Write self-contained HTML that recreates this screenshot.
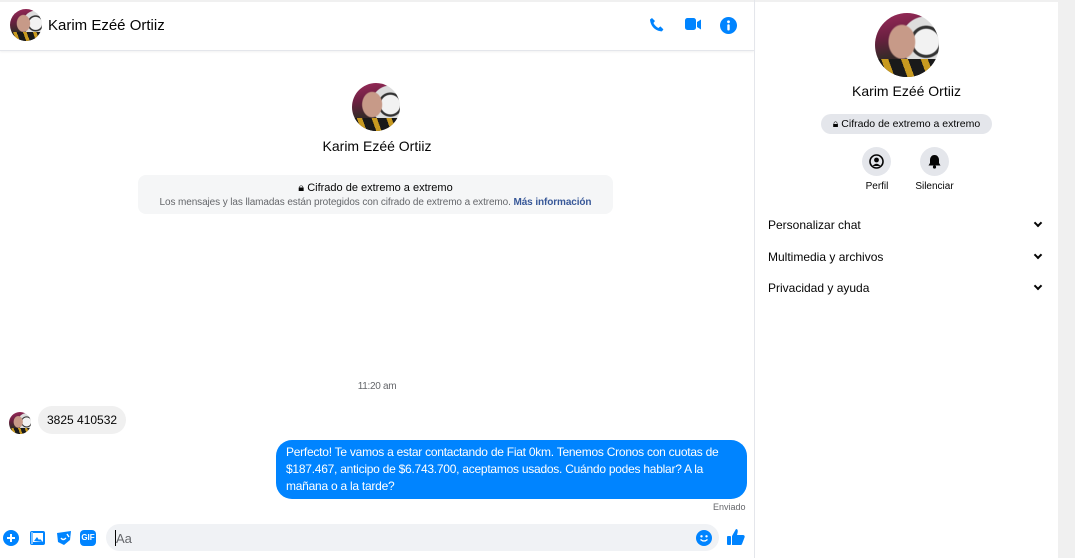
<!DOCTYPE html>
<html><head><meta charset="utf-8"><style>
*{margin:0;padding:0;box-sizing:border-box}
body{width:1075px;height:558px;overflow:hidden;background:#fff;font-family:"Liberation Sans",sans-serif;color:#050505;position:relative}
.abs{position:absolute}
.av{border-radius:50%;overflow:hidden;background:
radial-gradient(ellipse 22% 28% at 42% 45%,#c79a88 0 90%,transparent 100%),
radial-gradient(circle at 80% 45%,#f2f2f2 0 20%,#333 22% 25%,#ddd 27% 40%,transparent 42%),
linear-gradient(170deg,#9a2a5a 0%,#6a2040 35%,#3a2a2a 60%,#1a1414 100%);}
.av::after{content:"";position:absolute;left:0;right:0;bottom:0;height:28%;background:repeating-linear-gradient(70deg,#1a1a1a 0 18%,#c89a20 18% 28%)}
.chev{position:absolute;width:6px;height:6px;border-right:2px solid #050505;border-bottom:2px solid #050505;transform:rotate(45deg)}
</style></head><body>
<div class="abs" style="left:0;top:0;width:754px;height:51px;border-bottom:1px solid #e4e6eb;box-shadow:0 1px 2px rgba(0,0,0,.06)"></div>
<div class="abs" style="left:0;top:0;width:1058px;height:2px;background:#f0f0f0"></div>
<div class="abs av" style="left:10px;top:9px;width:32px;height:32px"></div>
<div class="abs" style="left:48px;top:17px;font-size:15px">Karim Ezéé Ortiiz</div>
<svg class="abs" style="left:649px;top:17px" width="16" height="16" viewBox="0 0 16 16"><path d="M3 1l3 3-1.6 2c1 2 3 4 5 5l2-1.6 3 3-1.5 2C6 14 1.5 9 1 2.5z" fill="#0084ff"/></svg>
<svg class="abs" style="left:685px;top:17px" width="17" height="15" viewBox="0 0 17 15"><rect x="0" y="1" width="11" height="12" rx="2.5" fill="#0084ff"/><path d="M12 5l4-2.5v10L12 10z" fill="#0084ff"/></svg>
<svg class="abs" style="left:720px;top:17px" width="17" height="17" viewBox="0 0 17 17"><circle cx="8.5" cy="8.5" r="8.5" fill="#0084ff"/><circle cx="8.5" cy="4.8" r="1.4" fill="#fff"/><rect x="7.3" y="7.2" width="2.4" height="6.3" rx="1" fill="#fff"/></svg>
<div class="abs" style="left:754px;top:0;width:1px;height:558px;background:#e4e6eb"></div>
<div class="abs" style="left:1058px;top:0;width:17px;height:558px;background:#f0f0f0"></div>
<div class="abs av" style="left:352px;top:83px;width:48px;height:48px"></div>
<div class="abs" style="left:0;width:754px;top:138px;text-align:center;font-size:14px">Karim Ezéé Ortiiz</div>
<div class="abs" style="left:138px;top:175px;width:475px;height:39px;background:#f5f6f7;border-radius:8px;text-align:center">
<div style="font-size:11px;margin-top:7px">&#128274;&#xFE0E; Cifrado de extremo a extremo</div>
<div style="font-size:10px;color:#65676b;margin-top:2px;letter-spacing:-.1px">Los mensajes y las llamadas están protegidos con cifrado de extremo a extremo. <span style="color:#385898;font-weight:bold">Más información</span></div>
</div>
<div class="abs" style="left:0;width:754px;top:381px;text-align:center;font-size:10px;color:#65676b;letter-spacing:-.3px">11:20 am</div>
<div class="abs av" style="left:9px;top:412px;width:22px;height:22px"></div>
<div class="abs" style="left:38px;top:406px;height:28px;padding:0 9px;line-height:28px;background:#f0f0f0;border-radius:14px;font-size:12px">3825 410532</div>
<div class="abs" style="left:276px;top:440px;width:471px;height:59px;background:#0084ff;border-radius:16px;color:#fff;font-size:12px;line-height:17px;padding:4px 8px 4px 10px;letter-spacing:-.25px">Perfecto! Te vamos a estar contactando de Fiat 0km. Tenemos Cronos con cuotas de $187.467, anticipo de $6.743.700, aceptamos usados. Cuándo podes hablar? A la mañana o a la tarde?</div>
<div class="abs" style="left:713px;top:502px;font-size:9px;color:#65676b">Enviado</div>
<svg class="abs" style="left:3px;top:530px" width="16" height="16" viewBox="0 0 16 16"><circle cx="8" cy="8" r="8" fill="#0084ff"/><path d="M8 4v8M4 8h8" stroke="#fff" stroke-width="2"/></svg>
<svg class="abs" style="left:30px;top:530px" width="16" height="16" viewBox="0 0 16 16"><rect x="0" y="1" width="15" height="14" rx="2" fill="#0084ff"/><rect x="3" y="3" width="10" height="9" fill="#fff"/><path d="M4 11l3-4 2 3 1-1 3 3z" fill="#0084ff"/><rect x="1.5" y="2" width="1" height="12" fill="#fff"/></svg>
<svg class="abs" style="left:56px;top:530px" width="16" height="16" viewBox="0 0 16 16"><path d="M1 3l14-2-1 9-6 5-6-3z" fill="#0084ff"/><path d="M5 8q2 3 5 0M11 4l2 3" stroke="#fff" stroke-width="1.4" fill="none"/></svg>
<div class="abs" style="left:80px;top:530px;width:16px;height:16px;background:#0084ff;border-radius:4px;color:#fff;font-size:8px;font-weight:bold;line-height:16px;text-align:center">GIF</div>
<div class="abs" style="left:106px;top:524px;width:613px;height:27px;background:#f0f2f5;border-radius:14px"></div>
<div class="abs" style="left:115px;top:530px;width:1px;height:16px;background:#050505"></div>
<div class="abs" style="left:116px;top:531px;font-size:13px;color:#65676b">Aa</div>
<svg class="abs" style="left:696px;top:530px" width="16" height="16" viewBox="0 0 16 16"><circle cx="8" cy="8" r="8" fill="#0084ff"/><circle cx="5.5" cy="6.3" r="1.2" fill="#fff"/><circle cx="10.5" cy="6.3" r="1.2" fill="#fff"/><path d="M4.5 9.5q3.5 3 7 0" stroke="#fff" stroke-width="1.3" fill="none"/></svg>
<svg class="abs" style="left:727px;top:528px" width="18" height="18" viewBox="0 0 18 18"><rect x="0" y="8" width="4" height="9" rx="1" fill="#0084ff"/><path d="M5 8l4-7c2 0 2 2 1.5 4L10 7h6c1.5 0 2 1.5 1.5 2.5L15 16c-.5 1-1 1-2 1H5z" fill="#0084ff"/></svg>
<div class="abs av" style="left:875px;top:13px;width:64px;height:64px"></div>
<div class="abs" style="left:755px;width:303px;top:83px;text-align:center;font-size:14px">Karim Ezéé Ortiiz</div>
<div class="abs" style="left:821px;top:114px;width:171px;height:20px;background:#e4e6eb;border-radius:10px;font-size:10.5px;line-height:20px;text-align:center">&#128274;&#xFE0E; Cifrado de extremo a extremo</div>
<div class="abs" style="left:862px;top:147px;width:29px;height:29px;border-radius:50%;background:#e4e6eb"></div>
<svg class="abs" style="left:869px;top:154px" width="15" height="15" viewBox="0 0 15 15"><circle cx="7.5" cy="7.5" r="6.5" fill="none" stroke="#050505" stroke-width="1.6"/><circle cx="7.5" cy="6" r="2.4" fill="#050505"/><path d="M3.5 12q4-4.5 8 0" fill="#050505"/></svg>
<div class="abs" style="left:920px;top:147px;width:29px;height:29px;border-radius:50%;background:#e4e6eb"></div>
<svg class="abs" style="left:927px;top:154px" width="15" height="15" viewBox="0 0 15 15"><path d="M7.5 1c-3 0-4.5 2.5-4.5 5v3l-1.5 2.5h12L12 9V6c0-2.5-1.5-5-4.5-5z" fill="#050505"/><circle cx="7.5" cy="13" r="1.6" fill="#050505"/></svg>
<div class="abs" style="left:857px;top:181px;width:40px;text-align:center;font-size:10px">Perfil</div>
<div class="abs" style="left:906px;top:181px;width:57px;text-align:center;font-size:10px">Silenciar</div>
<div class="abs" style="left:768px;top:218px;font-size:12px">Personalizar chat</div>
<div class="abs" style="left:768px;top:250px;font-size:12px">Multimedia y archivos</div>
<div class="abs" style="left:768px;top:281px;font-size:12px">Privacidad y ayuda</div>
<div class="chev" style="left:1035px;top:220px"></div>
<div class="chev" style="left:1035px;top:252px"></div>
<div class="chev" style="left:1035px;top:283px"></div>
</body></html>
